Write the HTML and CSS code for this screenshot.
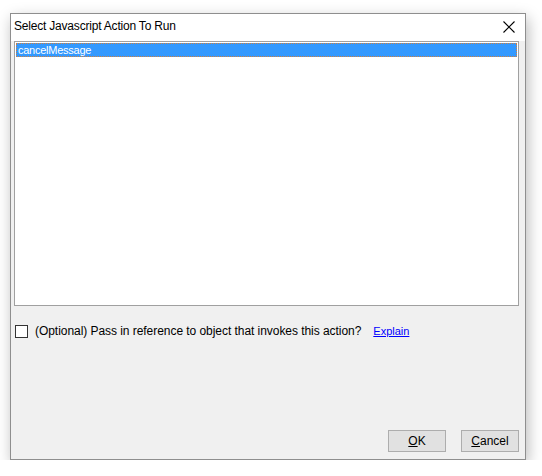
FILE: index.html
```html
<!DOCTYPE html>
<html>
<head>
<meta charset="utf-8">
<link rel="stylesheet" href="styles.css">
</head>
<body>
<div class="window">
  <div class="titlebar">
    <span class="title">Select Javascript Action To Run</span>
    <svg class="close" width="12" height="12" viewBox="0 0 12 12"><path d="M0.5 0.5 L11.5 11.5 M11.5 0.5 L0.5 11.5" stroke="#000" stroke-width="1.1" fill="none"/></svg>
  </div>
  <div class="content">
    <div class="listbox">
      <div class="item selected">cancelMessage</div>
    </div>
    <div class="optrow">
      <span class="checkbox"></span>
      <span class="optlabel">(Optional) Pass in reference to object that invokes this action?</span>
      <a class="explain" href="#">Explain</a>
    </div>
    <div class="spacer"></div>
    <div class="buttons">
      <button class="btn"><u>O</u>K</button>
      <button class="btn"><u>C</u>ancel</button>
    </div>
  </div>
</div>
</body>
</html>
```
FILE: styles.css
```css
html, body {
  margin: 0;
  padding: 0;
  background: #ffffff;
}
body {
  padding: 13px 0 0 10px;
  font-family: "Liberation Sans", Arial, sans-serif;
  font-size: 12px;
}
.window {
  width: 514px;
  height: 445px;
  border: 1px solid #8e8e8e;
  background: #f0f0f0;
  box-shadow: 2px 5px 14px rgba(0, 0, 0, 0.28);
  display: flex;
  flex-direction: column;
}
.titlebar {
  height: 27px;
  background: #ffffff;
  display: flex;
  align-items: center;
  justify-content: space-between;
  padding: 0 10px 0 3px;
}
.title {
  color: #000;
  font-size: 12px;
  letter-spacing: -0.2px;
  margin-top: -3px;
}
.close {
  display: block;
  margin-top: -2px;
}
.content {
  flex: 1;
  display: flex;
  flex-direction: column;
  padding: 0 6px 7px 3px;
}
.listbox {
  box-sizing: border-box;
  height: 265px;
  background: #fff;
  border: 1px solid #a0a0a0;
  padding: 1px;
}
.item {
  box-sizing: border-box;
  height: 14px;
  line-height: 12px;
  padding-left: 1px;
  font-size: 11px;
  letter-spacing: -0.25px;
}
.selected {
  background: #3399ff;
  color: #fff;
  border: 1px dotted #d08040;
}
.optrow {
  display: flex;
  align-items: center;
  margin-top: 17px;
  height: 16px;
}
.checkbox {
  width: 11px;
  height: 11px;
  border: 1px solid #333;
  background: #fff;
  margin-left: 1px;
}
.optlabel {
  margin-left: 7px;
  color: #000;
  letter-spacing: -0.05px;
}
.explain {
  margin-left: 12px;
  color: #0000ff;
  font-size: 11px;
  text-decoration: underline;
}
.spacer {
  flex: 1;
}
.buttons {
  display: flex;
  justify-content: flex-end;
  gap: 15px;
}
.btn {
  width: 58px;
  height: 22px;
  border: 1px solid #adadad;
  background: #e1e1e1;
  font-family: "Liberation Sans", Arial, sans-serif;
  font-size: 12px;
  color: #000;
  padding: 0;
}
```
